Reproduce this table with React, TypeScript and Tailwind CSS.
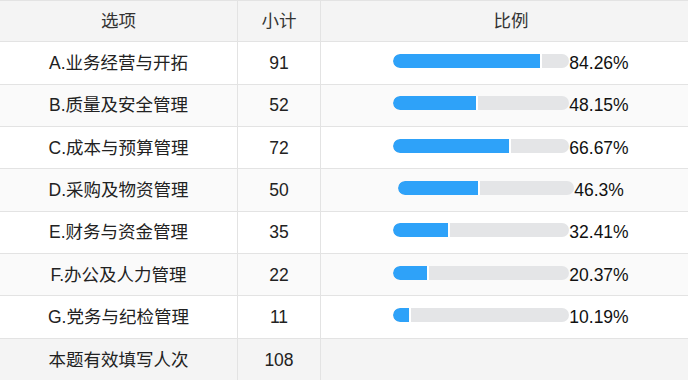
import React from 'react'

const rows = [
  { label: 'A.业务经营与开拓', count: 91, pct: 84.26 },
  { label: 'B.质量及安全管理', count: 52, pct: 48.15 },
  { label: 'C.成本与预算管理', count: 72, pct: 66.67 },
  { label: 'D.采购及物资管理', count: 50, pct: 46.3 },
  { label: 'E.财务与资金管理', count: 35, pct: 32.41 },
  { label: 'F.办公及人力管理', count: 22, pct: 20.37 },
  { label: 'G.党务与纪检管理', count: 11, pct: 10.19 },
]

const font = { fontFamily: '"Liberation Sans", "Noto Sans CJK SC", sans-serif' }

function Bar({ pct }: { pct: number }) {
  return (
    <div className="flex items-center pl-[13px] justify-center">
      <div className="w-[176px] h-[14px] mb-1 bg-[#e4e5e7] rounded-full overflow-hidden flex">
        <div
          className="h-full bg-[#2ea2f9] rounded-l-full border-r-2 border-white"
          style={{ width: `${pct}%` }}
        />
      </div>
      <span className="text-[17.5px] text-[#111]">{pct}%</span>
    </div>
  )
}

export default function App() {
  return (
    <div className="w-[688px] h-[380px] bg-white overflow-hidden text-[#222]" style={font}>
      <div className="grid grid-cols-[238px_83px_1fr] h-[42.33px] bg-[#f4f4f4] border-t border-b border-[#e3e3e3] text-[17.5px] text-[#333]">
        <div className="flex items-center justify-center border-r border-[#e3e3e3]">选项</div>
        <div className="flex items-center justify-center border-r border-[#e3e3e3]">小计</div>
        <div className="flex items-center justify-center pl-[13px]">比例</div>
      </div>
      {rows.map((r, i) => (
        <div
          key={r.label}
          className={`grid grid-cols-[238px_83px_1fr] h-[42.33px] border-b border-[#e3e3e3] text-[17.5px] ${i % 2 === 1 ? 'bg-[#fafafa]' : 'bg-white'}`}
        >
          <div className="flex items-center justify-center border-r border-[#e3e3e3]">{r.label}</div>
          <div className="flex items-center justify-center border-r border-[#e3e3e3]">{r.count}</div>
          <Bar pct={r.pct} />
        </div>
      ))}
      <div className="grid grid-cols-[238px_83px_1fr] h-[42.33px] bg-[#f4f4f4] text-[17.5px]">
        <div className="flex items-center justify-center border-r border-[#e3e3e3]">本题有效填写人次</div>
        <div className="flex items-center justify-center border-r border-[#e3e3e3]">108</div>
        <div />
      </div>
    </div>
  )
}
